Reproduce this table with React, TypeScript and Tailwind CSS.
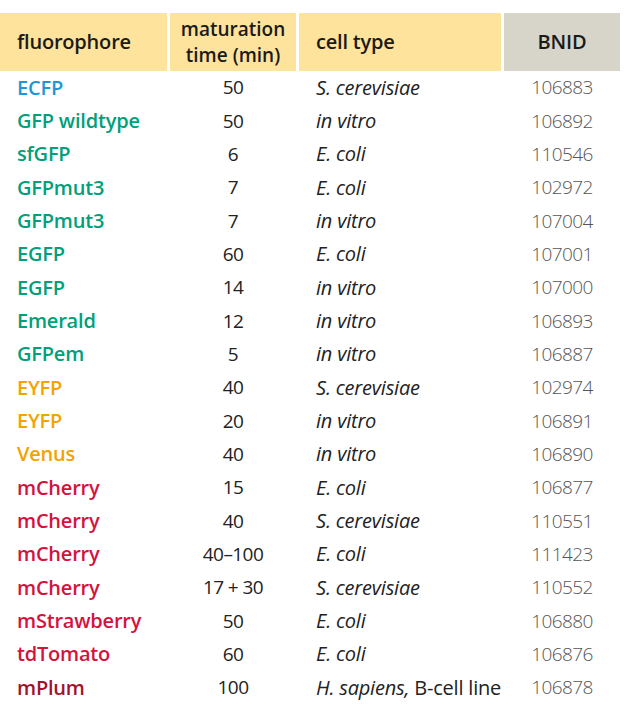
import React from "react";

type Row = { name: string; color: string; time: string; cell: React.ReactNode; bnid: string };

const BLUE = "text-[#1c98d6]";
const GREEN = "text-[#00a07a]";
const YELLOW = "text-[#f2a300]";
const RED = "text-[#d4123e]";
const PLUM = "text-[#a3122b]";

const rows: Row[] = [
  { name: "ECFP", color: BLUE, time: "50", cell: <i>S. cerevisiae</i>, bnid: "106883" },
  { name: "GFP wildtype", color: GREEN, time: "50", cell: <i>in vitro</i>, bnid: "106892" },
  { name: "sfGFP", color: GREEN, time: "6", cell: <i>E. coli</i>, bnid: "110546" },
  { name: "GFPmut3", color: GREEN, time: "7", cell: <i>E. coli</i>, bnid: "102972" },
  { name: "GFPmut3", color: GREEN, time: "7", cell: <i>in vitro</i>, bnid: "107004" },
  { name: "EGFP", color: GREEN, time: "60", cell: <i>E. coli</i>, bnid: "107001" },
  { name: "EGFP", color: GREEN, time: "14", cell: <i>in vitro</i>, bnid: "107000" },
  { name: "Emerald", color: GREEN, time: "12", cell: <i>in vitro</i>, bnid: "106893" },
  { name: "GFPem", color: GREEN, time: "5", cell: <i>in vitro</i>, bnid: "106887" },
  { name: "EYFP", color: YELLOW, time: "40", cell: <i>S. cerevisiae</i>, bnid: "102974" },
  { name: "EYFP", color: YELLOW, time: "20", cell: <i>in vitro</i>, bnid: "106891" },
  { name: "Venus", color: YELLOW, time: "40", cell: <i>in vitro</i>, bnid: "106890" },
  { name: "mCherry", color: RED, time: "15", cell: <i>E. coli</i>, bnid: "106877" },
  { name: "mCherry", color: RED, time: "40", cell: <i>S. cerevisiae</i>, bnid: "110551" },
  { name: "mCherry", color: RED, time: "40–100", cell: <i>E. coli</i>, bnid: "111423" },
  { name: "mCherry", color: RED, time: "17 + 30", cell: <i>S. cerevisiae</i>, bnid: "110552" },
  { name: "mStrawberry", color: RED, time: "50", cell: <i>E. coli</i>, bnid: "106880" },
  { name: "tdTomato", color: RED, time: "60", cell: <i>E. coli</i>, bnid: "106876" },
  {
    name: "mPlum",
    color: PLUM,
    time: "100",
    cell: (
      <>
        <i>H. sapiens,</i> B-cell line
      </>
    ),
    bnid: "106878",
  },
];

export default function App() {
  return (
    <div className="w-[626px] h-[706px] bg-white pt-[13px] text-[20px] text-[#222] font-['Open_Sans',sans-serif]">
      {/* header */}
      <div className="grid grid-cols-[167px_126px_202px_116px] gap-x-[3px] h-[58px] font-semibold text-[#1a1a1a] tracking-[-0.01em]">
        <div className="bg-[#fde39c] flex items-center pl-[17px]">fluorophore</div>
        <div className="bg-[#fde39c] flex flex-col items-center justify-center text-[19px] leading-[26px] tracking-normal">
          <span>maturation</span>
          <span>time (min)</span>
        </div>
        <div className="bg-[#fde39c] flex items-center pl-[17px]">cell type</div>
        <div className="bg-[#d7d5ca] flex items-center justify-center">BNID</div>
      </div>

      {/* body */}
      {rows.map((r, i) => (
        <div key={i} className="grid grid-cols-[167px_126px_202px_116px] gap-x-[3px] h-[33.33px] items-center">
          <div className={`pl-[17px] font-semibold tracking-[-0.01em] ${r.color}`}>{r.name}</div>
          <div className="text-center text-[19px] tracking-[-0.03em]">{r.time}</div>
          <div className="pl-[17px] whitespace-nowrap tracking-[-0.01em]">{r.cell}</div>
          <div className="text-center text-[19px] tracking-[-0.03em] text-[#555] font-light">{r.bnid}</div>
        </div>
      ))}
    </div>
  );
}
